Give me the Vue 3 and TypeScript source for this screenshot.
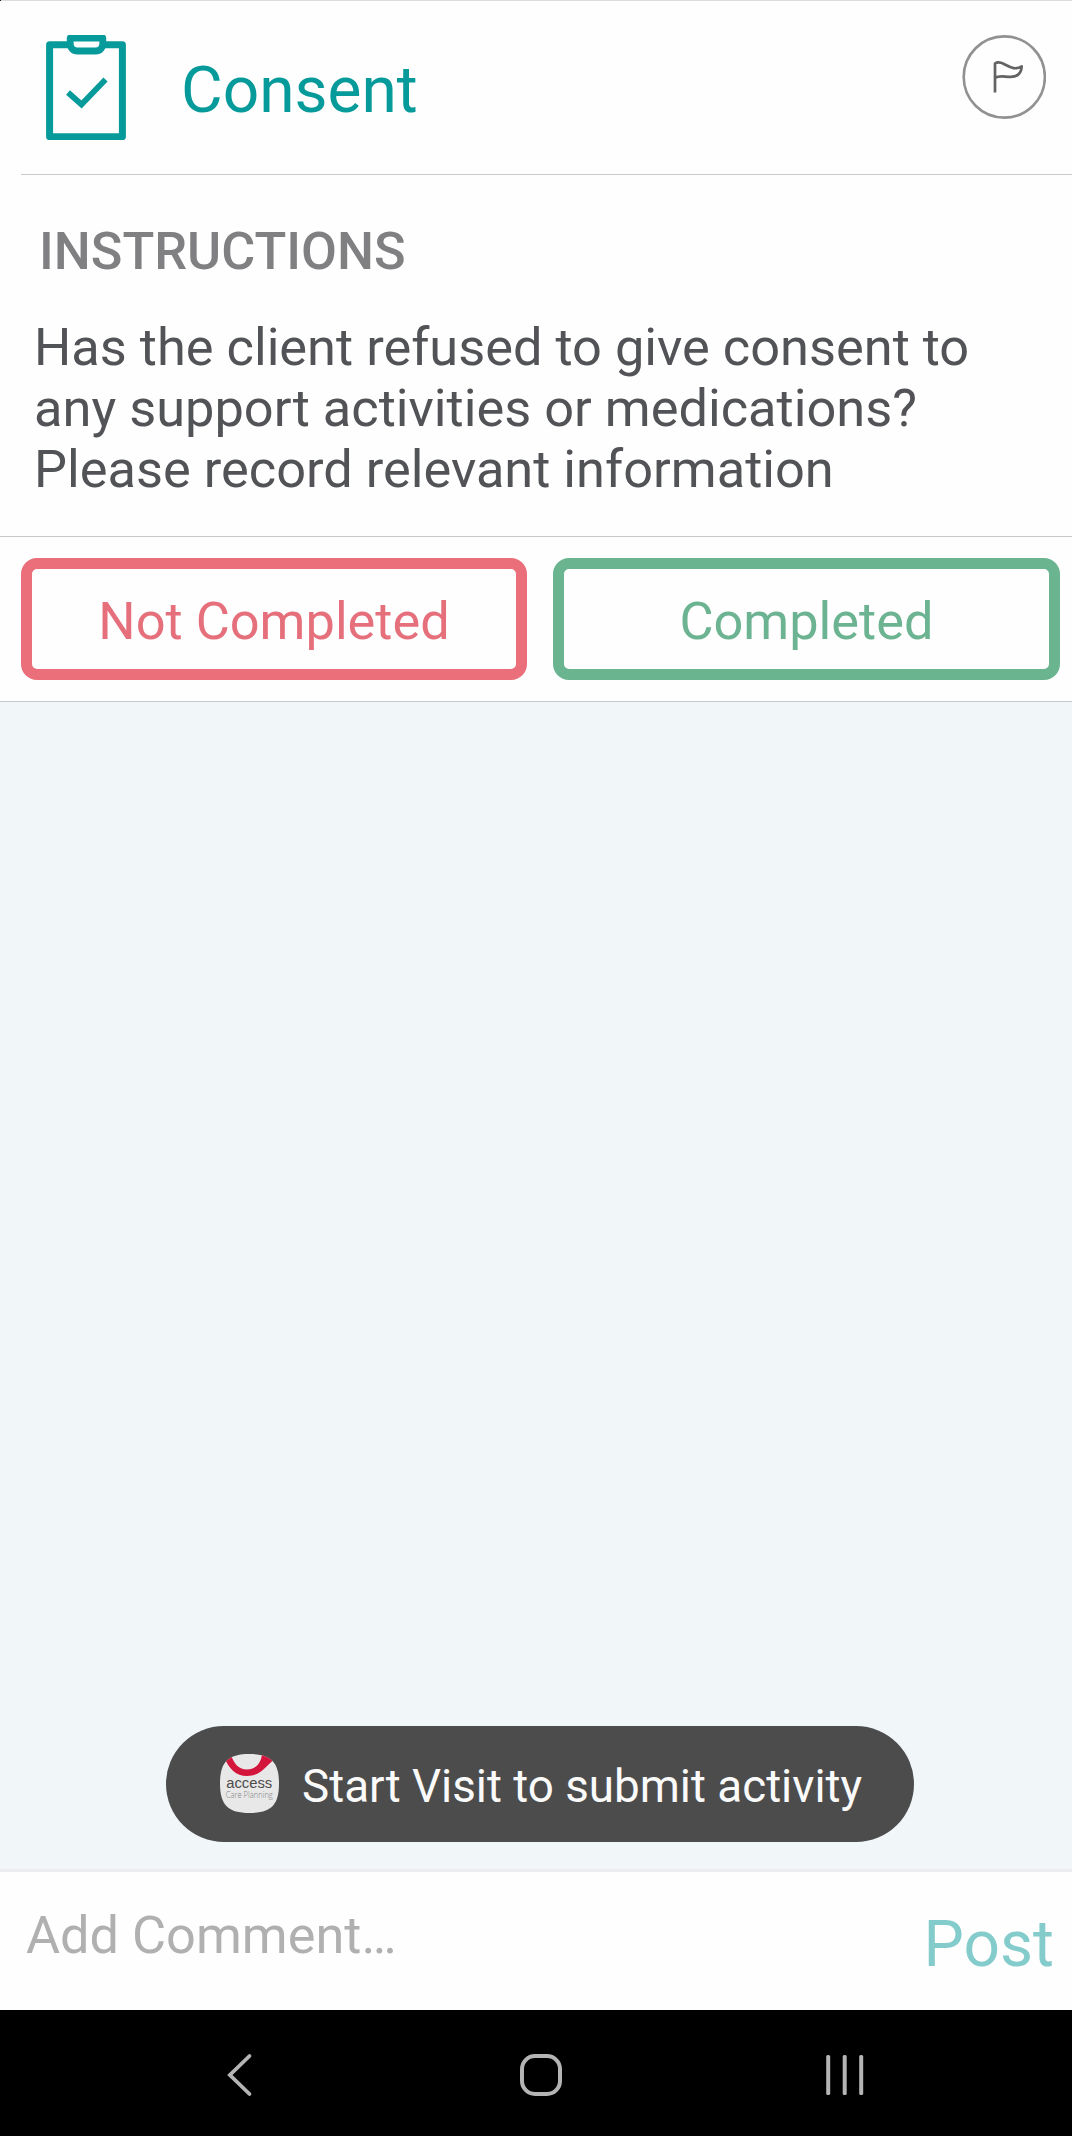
<script setup lang="ts">
interface Action {
  label: string
  kind: 'danger' | 'success'
}

const title = 'Consent'
const instructions: string[] = [
  'Has the client refused to give consent to',
  'any support activities or medications?',
  'Please record relevant information',
]
const actions: Action[] = [
  { label: 'Not Completed', kind: 'danger' },
  { label: 'Completed', kind: 'success' },
]
const toast = 'Start Visit to submit activity'
</script>

<template>
  <div class="screen">
    <header class="header">
      <svg class="clipboard" width="80" height="105" viewBox="0 0 80 105" fill="none" stroke="#079a9a">
        <path d="M22 9.700H3.600V101.700H76.400V9.700H59" stroke-width="7" stroke-linejoin="round" />
        <path d="M24.200 3H56.800V8C56.800 13 54 16 49.500 16H31.500C27 16 24.200 13 24.200 8Z" stroke-width="6.800" stroke-linejoin="round" />
        <path d="M22 57.500L35.500 69.500L59.500 44.500" stroke-width="5.800" />
      </svg>
      <h1 class="title">{{ title }}</h1>
      <button class="flag" aria-label="Flag">
        <svg width="84" height="84" viewBox="0 0 84 84" fill="none">
          <circle cx="42.300" cy="42" r="40.600" stroke="#919191" stroke-width="2.600" />
          <path
            d="M33 57.500V28.500C35 27 38.500 27.200 42 29C48 32 53 35.500 59.700 31.300C59.500 38 55.500 41.700 49 41.800C43 42 37 40 33 43"
            stroke="#636363" stroke-width="2.700" stroke-linejoin="round"
          />
        </svg>
      </button>
    </header>

    <section class="instructions">
      <h2 class="heading">INSTRUCTIONS</h2>
      <p class="body"><span v-for="line in instructions" :key="line" class="line">{{ line }}</span></p>
    </section>

    <div class="actions">
      <button v-for="a in actions" :key="a.label" class="action" :class="a.kind">{{ a.label }}</button>
    </div>

    <main class="feed">
      <div class="toast">
        <svg class="app-icon" width="59" height="59" viewBox="0 0 59 59">
          <defs>
            <clipPath id="squircle">
              <path d="M29.500 0C51 0 59 8 59 29.500S51 59 29.500 59S0 51 0 29.500S8 0 29.500 0Z" />
            </clipPath>
          </defs>
          <g clip-path="url(#squircle)">
            <rect width="59" height="59" fill="#e8e8e8" />
            <path d="M4 3L11 1C14 10 19 15.500 27 15.500C35 15.500 41 10 42 0L55 5C46 11 42 22 27 22C16 22 9 15 4 3Z" fill="#d4163c" />
          </g>
          <text x="6.200" y="34" class="brand" textLength="46" lengthAdjust="spacingAndGlyphs">access</text>
          <text x="5.800" y="44.300" class="product" textLength="47" lengthAdjust="spacingAndGlyphs">Care Planning</text>
        </svg>
        <span class="toast-text">{{ toast }}</span>
      </div>
    </main>

    <footer class="composer">
      <span class="placeholder">Add Comment…</span>
      <button class="post">Post</button>
    </footer>

    <nav class="navbar">
      <svg class="back" width="26" height="44" viewBox="0 0 26 44" fill="none" stroke="#b4b4b4" stroke-width="3.800">
        <path d="M22.500 3L2.900 22L22.500 41" stroke-linecap="round" stroke-linejoin="miter" />
      </svg>
      <svg class="home" width="42" height="42" viewBox="0 0 42 42" fill="none" stroke="#b4b4b4" stroke-width="4">
        <rect x="2" y="2" width="38" height="38" rx="13" />
      </svg>
      <svg class="recents" width="38" height="40" viewBox="0 0 38 40" fill="#b4b4b4">
        <rect x="0.200" width="4" height="40" rx="1.500" />
        <rect x="16.700" width="4" height="40" rx="1.500" />
        <rect x="33.200" width="4" height="40" rx="1.500" />
      </svg>
    </nav>
  </div>
</template>

<style>
body {
  margin: 0;
  background: #fff;
}
</style>

<style scoped>
.screen {
  width: 1072px;
  height: 2136px;
  display: flex;
  flex-direction: column;
  overflow: hidden;
  background: #fefefe;
  font-family: Roboto, "Liberation Sans", sans-serif;
}
button {
  margin: 0;
  padding: 0;
  border: 0;
  background: none;
  font: inherit;
}
.header {
  box-sizing: border-box;
  height: 175px;
  flex: none;
  display: flex;
  align-items: flex-start;
  padding: 35px 26px 0 46px;
  background:
    linear-gradient(#222, #222) 0 0 / 1px 1px no-repeat,
    linear-gradient(#dcdcdc, #dcdcdc) 0 0 / 100% 1px no-repeat,
    linear-gradient(#c9c9c9, #c9c9c9) 21px 174px / 1051px 1px no-repeat;
}
.title {
  margin: 19px 0 0 55px;
  font-size: 64px;
  line-height: 74px;
  font-weight: 400;
  color: #079a9a;
}
.flag {
  margin-left: auto;
  width: 84px;
  height: 84px;
}
.flag svg {
  display: block;
}
.instructions {
  box-sizing: border-box;
  height: 362px;
  flex: none;
  padding: 46px 34px 0;
  border-bottom: 1px solid #c8c9ca;
}
.heading {
  margin: 0 0 35px 5px;
  font-size: 52.200px;
  line-height: 61px;
  font-weight: 500;
  color: #808082;
}
.body {
  margin: 0;
  font-size: 52.350px;
  line-height: 61px;
  color: #525356;
}
.line {
  display: block;
  white-space: nowrap;
}
.actions {
  box-sizing: border-box;
  height: 165px;
  flex: none;
  display: flex;
  gap: 26.250px;
  padding: 21px 12.500px 21px 21px;
  border-bottom: 1px solid #c4c8ca;
}
.action {
  box-sizing: border-box;
  flex: 1;
  height: 122px;
  border: 11px solid;
  border-radius: 16px;
  padding-top: 5px;
  font-size: 52.350px;
  line-height: 61px;
}
.danger {
  border-color: #ea6f7a;
  color: #e5707c;
}
.success {
  border-color: #6ab490;
  color: #6cb392;
}
.feed {
  box-sizing: border-box;
  flex: 1;
  display: flex;
  align-items: flex-end;
  padding: 0 0 27px 166px;
  background: #f1f7f9;
}
.toast {
  box-sizing: border-box;
  width: 748px;
  height: 116px;
  display: flex;
  align-items: center;
  padding-left: 54px;
  border-radius: 58px;
  background: #4c4c4c;
}
.app-icon {
  display: block;
  margin-top: -1px;
}
.brand {
  font: 15.500px "Liberation Sans", sans-serif;
  fill: #4c4c4c;
}
.product {
  font: 300 8.500px "Open Sans", sans-serif;
  fill: #808080;
}
.toast-text {
  margin: 6px 0 0 23px;
  font-size: 45.750px;
  line-height: 54px;
  white-space: nowrap;
  color: #fafafa;
}
.composer {
  box-sizing: border-box;
  height: 141px;
  flex: none;
  display: flex;
  align-items: flex-start;
  justify-content: space-between;
  padding: 0 18px 0 26px;
  border-top: 3px solid #ececee;
}
.placeholder {
  margin-top: 33px;
  font-size: 52.300px;
  line-height: 61px;
  color: #b0b0b0;
}
.post {
  margin-top: 36px;
  font-size: 64px;
  line-height: 74px;
  color: #84cccb;
}
.navbar {
  height: 126px;
  flex: none;
  display: flex;
  align-items: center;
  padding-left: 227px;
  background: #000;
}
.back {
  margin-top: 4px;
}
.home {
  margin: 4px 0 0 267px;
}
.recents {
  margin: 4px 0 0 264px;
}
</style>
